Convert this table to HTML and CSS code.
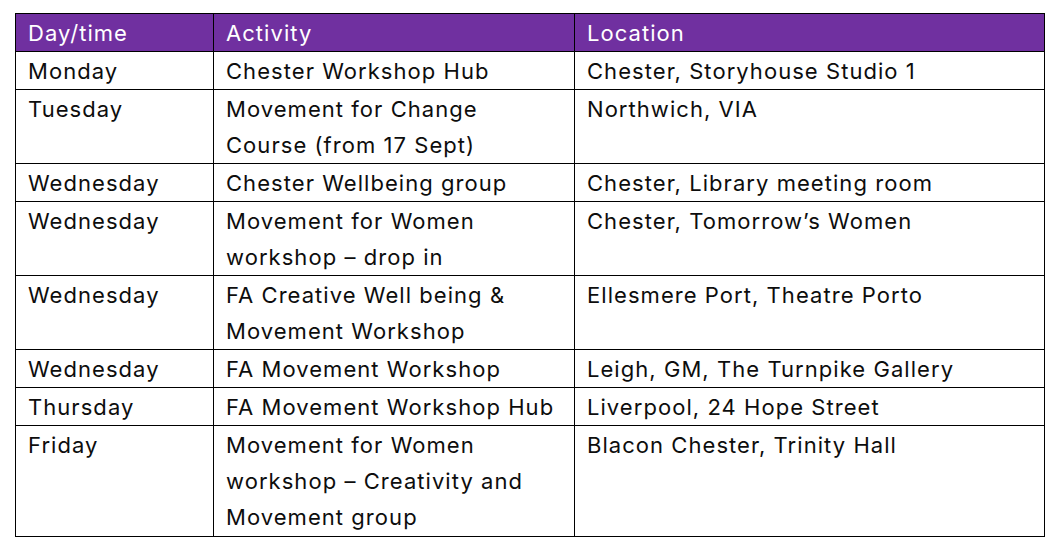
FILE: index.html
```html
<!DOCTYPE html>
<html>
<head>
<meta charset="utf-8">
<link rel="stylesheet" href="styles.css">
</head>
<body>
<table class="schedule">
  <colgroup>
    <col class="c-day">
    <col class="c-act">
    <col class="c-loc">
  </colgroup>
  <thead>
    <tr><th>Day/time</th><th>Activity</th><th>Location</th></tr>
  </thead>
  <tbody>
    <tr><td>Monday</td><td>Chester Workshop Hub</td><td>Chester, Storyhouse Studio 1</td></tr>
    <tr><td>Tuesday</td><td>Movement for Change<br>Course (from 17 Sept)</td><td>Northwich, VIA</td></tr>
    <tr><td>Wednesday</td><td>Chester Wellbeing group</td><td>Chester, Library meeting room</td></tr>
    <tr><td>Wednesday</td><td>Movement for Women<br>workshop – drop in</td><td>Chester, Tomorrow’s Women</td></tr>
    <tr><td>Wednesday</td><td>FA Creative Well being &amp;<br>Movement Workshop</td><td>Ellesmere Port, Theatre Porto</td></tr>
    <tr><td>Wednesday</td><td>FA Movement Workshop</td><td>Leigh, GM, The Turnpike Gallery</td></tr>
    <tr><td>Thursday</td><td>FA Movement Workshop Hub</td><td>Liverpool, 24 Hope Street</td></tr>
    <tr class="last"><td>Friday</td><td>Movement for Women<br>workshop – Creativity and<br>Movement group</td><td>Blacon Chester, Trinity Hall</td></tr>
  </tbody>
</table>
</body>
</html>
```
FILE: styles.css
```css
html, body {
  margin: 0;
  padding: 0;
  background: #ffffff;
}
body {
  padding: 13px 0 0 15px;
  font-family: Inter, "Open Sans", sans-serif;
  font-size: 22px;
  letter-spacing: 1.05px;
  color: #0d0d0d;
}
.schedule {
  border-collapse: collapse;
  table-layout: fixed;
  width: 1029px;
}
.c-day { width: 198px; }
.c-act { width: 361px; }
.c-loc { width: 470px; }
.schedule th,
.schedule td {
  border: 1px solid #000000;
  padding: 1px 12px 0;
  line-height: 36px;
  text-align: left;
  vertical-align: top;
  font-weight: 400;
  white-space: nowrap;
}
.schedule .last td {
  padding-bottom: 1px;
}
.schedule th {
  background: #7030a0;
  color: #ffffff;
}
```
